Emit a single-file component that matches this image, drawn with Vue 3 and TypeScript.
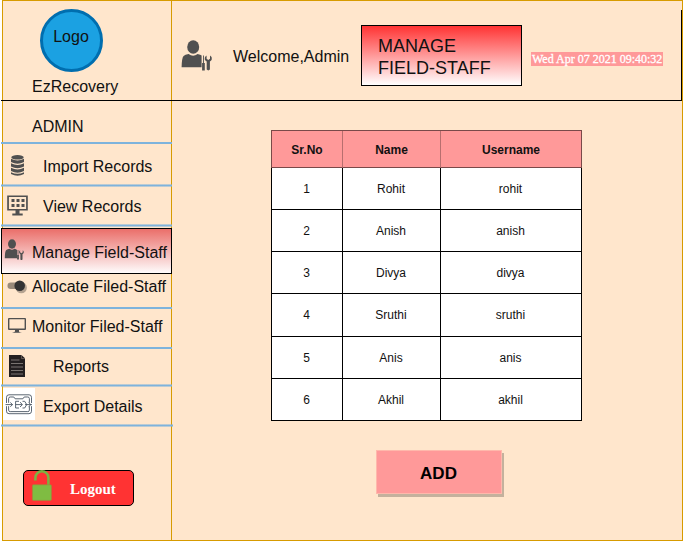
<script setup lang="ts">
interface NavItem {
  id: string
  label: string
  rule: 'crisp' | 'soft' | 'none'
  top: number
  height: number
}

interface Staff {
  name: string
  username: string
}

const navItems: NavItem[] = [
  { id: 'import', label: 'Import Records', rule: 'soft', top: 144, height: 40 },
  { id: 'view', label: 'View Records', rule: 'soft', top: 187, height: 37 },
  { id: 'manage', label: 'Manage Field-Staff', rule: 'none', top: 228, height: 46 },
  { id: 'allocate', label: 'Allocate Filed-Staff', rule: 'crisp', top: 274, height: 33 },
  { id: 'monitor', label: 'Monitor Filed-Staff', rule: 'crisp', top: 309, height: 38 },
  { id: 'reports', label: 'Reports', rule: 'soft', top: 349, height: 35 },
  { id: 'export', label: 'Export Details', rule: 'soft', top: 387, height: 37 },
]

const staff: Staff[] = [
  { name: 'Rohit', username: 'rohit' },
  { name: 'Anish', username: 'anish' },
  { name: 'Divya', username: 'divya' },
  { name: 'Sruthi', username: 'sruthi' },
  { name: 'Anis', username: 'anis' },
  { name: 'Akhil', username: 'akhil' },
]
</script>

<template>
  <div class="page">
    <aside class="sidebar">
      <div class="brand">
        <div class="logo">Logo</div>
        <div class="brand-name">EzRecovery</div>
      </div>
      <div class="role">ADMIN</div>
      <div class="rule crisp"></div>
      <nav>
        <template v-for="item in navItems" :key="item.id">
          <a class="nav-item" :class="item.id">
            <svg class="nav-icon" width="34" :height="item.height" :viewBox="`1 ${item.top} 34 ${item.height}`">
              <g v-if="item.id === 'import'" fill="#505050">
                <ellipse cx="17.5" cy="157.3" rx="6.2" ry="2.3" />
                <path d="M11 158.8q6.5 3.2 13 0v3.2q-6.5 3.6-13 0z" />
                <path d="M11 163.3q6.5 3.2 13 0v3.2q-6.5 3.6-13 0z" />
                <path d="M11 167.8q6.5 3.2 13 0v3.2q-6.5 3.6-13 0z" />
                <path d="M11 172.2q6.5 3.2 13 0v1.8q-6.5 3.6-13 0z" />
              </g>
              <g v-else-if="item.id === 'view'" fill="#505050">
                <path fill-rule="evenodd" d="M7.2 195.4h20.6v15.2h-8.3v3h3.2v1.8h-10.4v-1.8h3.2v-3H7.2zM8.9 197v12h17.2v-12z" />
                <path d="M11.5 199h3v3h-3zm5 0h3v3h-3zm5 0h3v3h-3zm-10 5h3v3h-3zm5 0h3v3h-3zm5 0h3v3h-3z" />
              </g>
              <g v-else-if="item.id === 'manage'" fill="#505050">
                <ellipse cx="12" cy="244" rx="4" ry="4.7" />
                <path d="M4.8 258.3q0-7 1.5-8.2 1.2-.9 3.3-1.3 2.4 2 4.8 0 2 .3 2.6 1.3v8.2z" />
                <path d="M17.6 250h.8v5h.5v4.5h-1.8V255h.5z" />
                <path d="M20.1 250.2v2.1l1.3.9 1.3-.9v-2.1q1.4.8 1 2.6-.2.9-1.2 1.5v5.2q-1.1 1-2.1 0v-5.2q-1-.6-1.2-1.5-.4-1.8.9-2.6z" />
              </g>
              <g v-else-if="item.id === 'allocate'">
                <rect x="7.5" y="282.6" width="15" height="6.4" rx="3.2" fill="#998a7a" />
                <circle cx="21.3" cy="287.7" r="5.6" fill="#b5a391" />
                <circle cx="19.7" cy="285.7" r="5.3" fill="#333" />
              </g>
              <g v-else-if="item.id === 'monitor'" fill="#505050">
                <path fill-rule="evenodd" d="M9 318h16q1 0 1 1v10q0 1-1 1h-6v1.4q0 .6 3 1.3H12q3-.7 3-1.3V330H9q-1 0-1-1v-10q0-1 1-1zm.4 1.3v9.2h15.2v-9.2z" />
              </g>
              <g v-else-if="item.id === 'reports'">
                <path d="M9 355h12.5l3.5 3.3V377H9z" fill="#231f20" />
                <path d="M21.5 355v3.5H25" fill="none" stroke="#8a7b70" stroke-width=".6" />
                <path d="M11 360h8.5M11 363.5h12M11 367h12M11 370.5h12M11 374h12" stroke="#8f8985" stroke-width=".8" />
              </g>
              <g v-else>
                <path d="M3 388h32v32H3z" fill="#fff" />
                <g fill="none" stroke="#4a5663" stroke-width=".9">
                  <path d="M6.5 403v-5.7q0-2.5 2.5-2.5h20q2.5 0 2.5 2.5v5.7M6.5 406.2v5q0 2.5 2.5 2.5h20q2.5 0 2.5-2.5v-5" />
                  <path d="M8.6 402.8v-4.2q0-1.6 1.6-1.6h3.6l1.3 1.8h7.8l1.3-1.8h3.6q1.6 0 1.6 1.6v4.2M8.6 406.2v4q0 1.4 1.6 1.4h17.6q1.6 0 1.6-1.4v-4" />
                  <path d="M5.5 404.6h7M10.3 402.5l2.3 2.1-2.3 2.1M15.5 404.6H22M20 402.2l2.5 2.4-2.5 2.4M25 404.6h7M28.6 402.5l2.3 2.1-2.3 2.1M19 401.3h-3.4v6.7H19M22.5 401.3h2.2l2 3.3-2 3.4h-2.2" />
                </g>
              </g>
            </svg>
            <span class="nav-label">{{ item.label }}</span>
          </a>
          <div v-if="item.rule !== 'none'" class="rule" :class="[item.rule, `after-${item.id}`]"></div>
        </template>
      </nav>
      <button class="logout">
        <svg width="22" height="34" viewBox="31 470 22 34">
          <path d="M35.4 480.5v-2.7a6.5 6.5 0 0 1 13 0V486" fill="none" stroke="#7cb342" stroke-width="2.6" />
          <rect x="32.4" y="484.8" width="19" height="15.6" rx="1" fill="#7fbc42" stroke="#a1863b" stroke-width=".7" />
        </svg>
        <span>Logout</span>
      </button>
    </aside>
    <section class="content">
      <header class="topbar">
        <svg class="user-icon" width="32" height="34" viewBox="181 39 32 34" fill="#505050">
          <ellipse cx="193.2" cy="47" rx="6" ry="6.7" />
          <path d="M181.6 67.3q.2-9.7 2-11.4 1.4-1.1 5-1.8 4.5 3.2 9 0 3 .6 4 1.5v11.7z" />
          <path d="M203 55.5h.9v7.4h.9v7.7h-2.7v-7.7h.9z" />
          <path d="M206.6 55.6v3.2l1.7 1.2 1.7-1.2v-3.2q2.3 1.2 1.8 3.7-.3 1.4-1.9 2.3v8q-1.6 1.6-3.2 0v-8q-1.7-.9-2-2.3-.4-2.5 1.9-3.7z" />
        </svg>
        <span class="welcome">Welcome,Admin</span>
        <h1 class="title">MANAGE<br />FIELD-STAFF</h1>
        <time class="clock">Wed Apr 07 2021 09:40:32</time>
      </header>
      <main class="main">
        <div class="table">
          <div class="row head">
            <div>Sr.No</div>
            <div>Name</div>
            <div>Username</div>
          </div>
          <div v-for="(person, index) in staff" :key="person.username" class="row">
            <div>{{ index + 1 }}</div>
            <div>{{ person.name }}</div>
            <div>{{ person.username }}</div>
          </div>
        </div>
        <button class="add">ADD</button>
      </main>
    </section>
  </div>
</template>

<style>
body {
  background: #fff;
}
</style>

<style scoped>
* {
  box-sizing: border-box;
}

.page {
  display: flex;
  width: 683px;
  height: 541px;
  padding-left: 1px;
  overflow: hidden;
  color: #111;
  font: 16px/18px "Liberation Sans", Arial, sans-serif;
  white-space: nowrap;
  background:
    linear-gradient(#d79b00, #d79b00) 2px 0 / 681px 1px no-repeat,
    linear-gradient(#d79b00, #d79b00) 2px 540px / 681px 1px no-repeat,
    linear-gradient(#d79b00, #d79b00) 2px 0 / 1px 541px no-repeat,
    linear-gradient(#d79b00, #d79b00) 171px 0 / 1px 541px no-repeat,
    linear-gradient(#d79b00, #d79b00) 682px 0 / 1px 541px no-repeat,
    linear-gradient(#ffe6cc, #ffe6cc) 2px 0 / 681px 541px no-repeat;
}

.sidebar {
  flex: none;
  width: 171px;
}

.brand {
  height: 101px;
  padding: 9px 0 0 31px;
  border-bottom: 1px solid #000;
}

.logo {
  width: 63px;
  height: 63px;
  margin-left: 8px;
  padding: 16px 1px 0 0;
  border: 3px solid #006eaf;
  border-radius: 50%;
  background: #1ba1e2;
  text-align: center;
}

.brand-name {
  margin-top: 6px;
}

.role {
  height: 41px;
  padding: 17px 0 0 31px;
}

.rule {
  height: 3px;
}

.rule.crisp {
  height: 2px;
  background: #7eb3dc;
}

.rule.soft {
  background: linear-gradient(#7eb3dc88 1px, #7eb3dc 1px 2px, #7eb3dc88 2px);
}

.after-view {
  margin-bottom: 1px;
}

.after-export {
  width: 172px;
}

.nav-item {
  display: flex;
  height: 40px;
}

.nav-icon {
  flex: none;
  width: 34px;
  height: 100%;
  margin-right: -3px;
}

.nav-label {
  padding-top: 14px;
}

.import .nav-label,
.export .nav-label {
  padding-left: 11px;
}

.nav-item.view {
  height: 37px;
}

.view .nav-label {
  padding: 11px 0 0 11px;
}

.nav-item.manage {
  height: 46px;
  background: linear-gradient(#ea6b66, #fff);
  outline: 1px solid #000;
  outline-offset: -1px;
}

.manage .nav-label {
  padding-top: 16px;
}

.nav-item.allocate {
  height: 33px;
}

.allocate .nav-label {
  padding-top: 4px;
}

.nav-item.monitor {
  height: 38px;
}

.monitor .nav-label {
  padding-top: 9px;
}

.nav-item.reports {
  height: 35px;
}

.reports .nav-label {
  padding: 9px 0 0 21px;
}

.nav-item.export {
  height: 37px;
}

.export .nav-label {
  padding-top: 11px;
}

.logout {
  display: flex;
  align-items: flex-start;
  width: 111px;
  height: 36px;
  margin: 43px 0 0 22px;
  padding: 0 0 0 7px;
  border: 1px solid #000;
  border-radius: 5px;
  background: #f33;
  color: #fff;
  font: bold 15px/17px "Liberation Serif", "Times New Roman", serif;
}

.logout svg {
  flex: none;
  margin-top: -1px;
}

.logout span {
  padding: 10px 0 0 17px;
}

.content {
  flex: 1;
}

.topbar {
  display: flex;
  align-items: flex-start;
  height: 101px;
  width: 510px;
  border-bottom: 1px solid #000;
  background: linear-gradient(#000, #000) 509px 10px / 1px 91px no-repeat;
}

.user-icon {
  margin: 39px 0 0 9px;
}

.welcome {
  width: 128px;
  margin: 48px 0 0 20px;
}

.title {
  width: 161px;
  height: 61px;
  margin: 25px 0 0;
  padding: 9px 0 0 16px;
  border: 1px solid #000;
  background: linear-gradient(#f33, #fff);
  font-size: 18px;
  font-weight: normal;
  line-height: 22px;
}

.clock {
  width: 132px;
  height: 14px;
  margin: 52px 0 0 9px;
  padding-left: 1px;
  background: #f99;
  color: #fff;
  font: 12px/14px "Liberation Serif", "Times New Roman", serif;
  -webkit-text-stroke: 0.3px #fff;
}

.main {
  padding: 29px 0 0 99px;
}

.table {
  width: 311px;
  height: 291px;
  display: grid;
  grid-template-rows: 38px 42px 42px 42px 43px 42px 42px;
  border-left: 1px solid #000;
  background: #fff;
  font-size: 12px;
}

.row {
  display: grid;
  grid-template-columns: 71px 98px 141px;
}

.row > div {
  display: flex;
  align-items: center;
  justify-content: center;
  padding-right: 1px;
  border: solid #000;
  border-width: 0 1px 1px 0;
}

.row.head {
  margin-left: -1px;
  border-top: 1px solid #7a4949;
  border-left: 1px solid #7a4949;
  background: #f99;
  font-weight: bold;
}

.row.head > div {
  padding: 2px 0 0;
  border-color: #b86e6e;
  border-bottom-color: #7a4949;
}

.row.head > div:last-child {
  border-right-color: #7a4949;
}

.add {
  display: block;
  width: 126px;
  height: 44px;
  margin: 29px 0 0 105px;
  padding: 2px 1px 0 0;
  border: 1px solid #ffb8ab;
  background: #f99;
  box-shadow: 2px 3px 0 #c4b19d;
  color: #000;
  font: bold 17px/19px "Liberation Sans", Arial, sans-serif;
}
</style>
